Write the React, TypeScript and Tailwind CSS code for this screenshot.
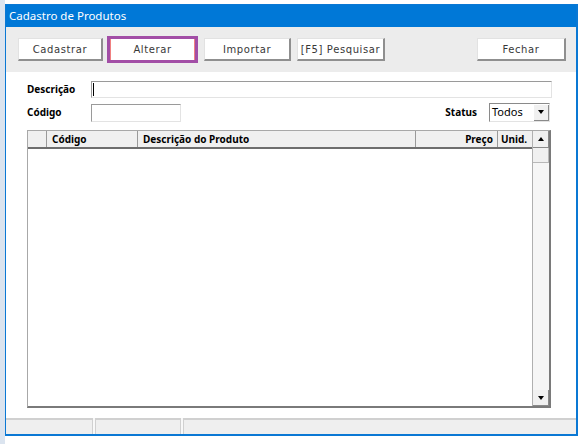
import React from 'react';

const btn =
  'h-[23px] bg-white border-t border-l border-t-[#e2e2e2] border-l-[#e2e2e2] border-r-2 border-b-2 border-r-[#8f8f8f] border-b-[#8f8f8f] text-[10px] tracking-[0.6px] text-[#383838] font-["DejaVu_Sans",sans-serif] flex items-center justify-center';

function Button({ label, w }: { label: string; w: string }) {
  return <div className={`${btn} ${w}`}>{label}</div>;
}

export default function App() {
  return (
    <div className="w-[583px] h-[444px] bg-white flex font-['Noto_Sans',sans-serif]">
      <div className="w-[5px] h-full bg-[#dbe4ef]" />
      <div className="pt-[4px]">
        <div className="w-[573px] h-[432px] border border-[#0a78d4] border-r-2 border-b-2 flex flex-col bg-white">
          {/* Title bar */}
          <div className="h-[22px] bg-[#0078d7] text-white text-[11.5px] pl-[3px] flex items-center">
            Cadastro de Produtos
          </div>

          {/* Toolbar */}
          <div className="h-[45px] bg-[#ececec] flex items-center pl-[12px] pr-[10px]">
            <Button label="Cadastrar" w="w-[85px]" />
            <div className="ml-[4px] border-[3px] border-[#a24ea6]">
              <div className="h-[21px] w-[85px] bg-white border-l border-r border-[#f08080] text-[10px] tracking-[0.6px] text-[#383838] font-['DejaVu_Sans',sans-serif] flex items-center justify-center">
                Alterar
              </div>
            </div>
            <Button label="Importar" w="w-[87px] ml-[6px]" />
            <Button label="[F5] Pesquisar" w="w-[88px] ml-[6px]" />
            <div className="flex-1" />
            <Button label="Fechar" w="w-[89px]" />
          </div>

          {/* Content */}
          <div className="flex-1 flex flex-col pl-[21px] pr-[24px] pt-[9px]">
            <div className="flex items-center h-[17px]">
              <span className="w-[64px] text-[10px] font-bold text-black">Descrição</span>
              <div className="flex-1 h-[17px] bg-white border-t border-l border-[#9a9a9a] border-r border-b border-r-[#e3e3e3] border-b-[#e3e3e3] flex items-center pl-[1px]">
                <div className="w-[1px] h-[13px] bg-black" />
              </div>
            </div>
            <div className="flex items-center h-[19px] mt-[5px]">
              <span className="w-[64px] text-[10px] font-bold text-black">Código</span>
              <div className="w-[90px] h-[18px] bg-white border-t border-l border-[#9a9a9a] border-r border-b border-r-[#e3e3e3] border-b-[#e3e3e3]" />
              <div className="flex-1" />
              <span className="text-[10px] font-bold text-black mr-[12px]">Status</span>
              <div className="w-[61px] mr-[2px] h-[19px] bg-white border-t border-l border-[#8a8a8a] border-r border-b border-r-[#e3e3e3] border-b-[#e3e3e3] flex items-center">
                <span className="flex-1 pl-[2px] text-[11px] text-black">Todos</span>
                <div className="w-[15px] h-[16px] bg-[#f0f0f0] border-r border-b border-[#8a8a8a] flex items-center justify-center">
                  <div className="w-0 h-0 border-l-[3.5px] border-r-[3.5px] border-t-[4px] border-l-transparent border-r-transparent border-t-black" />
                </div>
              </div>
            </div>

            {/* Grid */}
            <div className="mt-[8px] w-[524px] h-[278px] border-t border-l border-[#a8a8a8] border-r-2 border-b-2 border-r-[#7a7a7a] border-b-[#7a7a7a] flex bg-white">
              <div className="flex-1 flex flex-col">
                <div className="h-[18px] flex bg-[#f0f0f0] border-b-2 border-[#6e6e6e] text-[10px] font-bold text-black">
                  <div className="w-[19px] border-r border-[#9a9a9a]" />
                  <div className="w-[91px] border-r border-[#9a9a9a] pl-[5px] flex items-center">Código</div>
                  <div className="w-[278px] border-r border-[#9a9a9a] pl-[5px] flex items-center">Descrição do Produto</div>
                  <div className="w-[82px] border-r border-[#9a9a9a] pr-[4px] flex items-center justify-end">Preço</div>
                  <div className="flex-1 pl-[3px] flex items-center">Unid.</div>
                </div>
                <div className="flex-1" />
              </div>
              {/* Scrollbar */}
              <div className="w-[17px] flex flex-col border-l border-[#b0b0b0]">
                <div className="h-[17px] bg-[#f0f0f0] border-r border-b border-[#8a8a8a] flex items-center justify-center">
                  <div className="w-0 h-0 border-l-[3.5px] border-r-[3.5px] border-b-[4px] border-l-transparent border-r-transparent border-b-black" />
                </div>
                <div className="h-[15px] bg-[#f0f0f0] border-r border-b border-[#b8b8b8]" />
                <div className="flex-1 bg-[#f6f6f6]" />
                <div className="h-[16px] bg-[#f0f0f0] border-r border-b border-[#8a8a8a] flex items-center justify-center">
                  <div className="w-0 h-0 border-l-[3.5px] border-r-[3.5px] border-t-[4px] border-l-transparent border-r-transparent border-t-black" />
                </div>
              </div>
            </div>
            <div className="flex-1" />
          </div>

          {/* Status bar */}
          <div className="h-[16px] flex gap-[2px] bg-[#f8f8f8]">
            <div className="w-[87px] bg-[#efefef] border-t-2 border-r border-[#d0d0d0]" />
            <div className="w-[86px] bg-[#efefef] border-t-2 border-l border-r border-[#d0d0d0]" />
            <div className="flex-1 bg-[#efefef] border-t-2 border-l border-[#d0d0d0]" />
          </div>
        </div>
      </div>
    </div>
  );
}
